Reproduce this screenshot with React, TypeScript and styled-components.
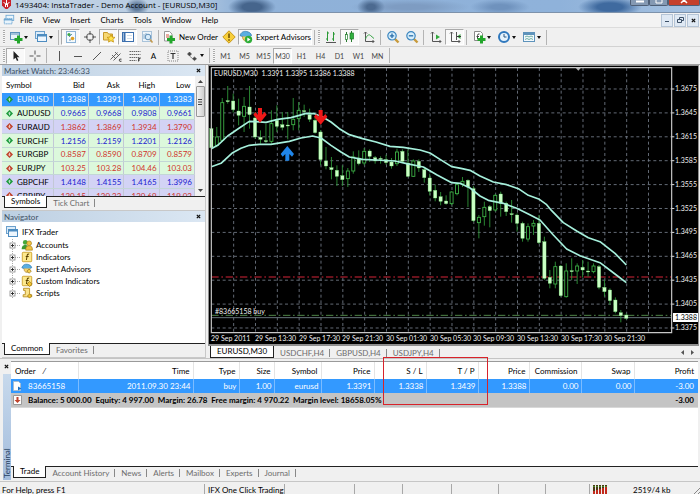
import React from "react";
import styled, { createGlobalStyle, css } from "styled-components";

const Global = createGlobalStyle`
  * { box-sizing: border-box; }
  body { margin: 0; background: #f0f0f0; overflow: hidden; }
  button, input { font: inherit; color: inherit; }
  svg { display: block; flex: none; }
`;

const UI = 'Lato, "Open Sans", sans-serif';
const CAPTION = '"Open Sans", "Noto Sans", sans-serif';

const Window = styled.div`
  display: flex;
  flex-direction: column;
  min-height: 100vh;
  font-family: ${UI};
  font-size: 8px;
  line-height: 12px;
  color: #000;
  background: #f0f0f0;
  white-space: nowrap;
`;

const TitleBar = styled.header`
  display: flex;
  align-items: flex-start;
  height: 13px;
  padding-left: 2px;
  gap: 4px;
  overflow: hidden;
  background:
    radial-gradient(ellipse 12px 9px at 137px 7px, #5d7898 30%, transparent),
    radial-gradient(ellipse 14px 9px at 371px 7px, #4c6a90 30%, transparent),
    radial-gradient(ellipse 60px 8px at 410px 7px, #7e9cc2 30%, transparent),
    radial-gradient(ellipse 30px 8px at 500px 7px, #6f92bd 30%, transparent),
    radial-gradient(ellipse 24px 10px at 252px 7px, #46658c 40%, transparent),
    radial-gradient(ellipse 32px 10px at 610px 7px, #3f6a9f 40%, transparent),
    linear-gradient(90deg, #c3d4e6 0, #b7cce2 190px, #8fb1d8 240px, #8fb2da 560px, #a5c1e0 100%);
  border-bottom: 1px solid #7d92ab;
`;

const Title = styled.h1`
  flex: 1;
  margin: 0;
  font-family: ${CAPTION};
  font-size: 8px;
  font-weight: 400;
  line-height: 9px;
`;

const CaptionButtons = styled.div`
  display: flex;
  height: 6px;
`;

const CaptionButton = styled.button<{ $close?: boolean }>`
  display: flex;
  justify-content: center;
  align-items: flex-start;
  width: ${(p) => (p.$close ? 32 : 19)}px;
  height: 6px;
  margin: 0;
  padding: 0;
  border: 1px solid #4e5f76;
  border-top: 0;
  border-radius: 0 0 2px 2px;
  background: ${(p) => (p.$close ? "#c5402c" : "#8499b3")};
`;

const MenuBar = styled.nav`
  display: flex;
  align-items: center;
  height: 15px;
  padding-left: 3px;
  background: #f3f3f3;
  border-bottom: 1px solid #dcdcdc;
`;

const MenuItems = styled.div`
  display: flex;
  flex: 1;
  gap: 10px;
  padding-left: 5px;
`;

const MenuItem = styled.button`
  padding: 0;
  border: 0;
  background: none;
`;

const MdiButton = styled.button`
  display: flex;
  align-items: center;
  justify-content: center;
  width: 12px;
  height: 13px;
  margin-right: 1px;
  padding: 0;
  border: 1px solid #b4c4d6;
  background: #dfe9f4;
`;

const ToolBar = styled.div<{ $last?: boolean }>`
  display: flex;
  align-items: center;
  height: ${(p) => (p.$last ? 18 : 19)}px;
  padding-left: 2px;
  border-bottom: 1px solid ${(p) => (p.$last ? "#a0a0a0" : "#d2d2d2")};
`;

const Grip = styled.i`
  width: 2px;
  height: 14px;
  margin: 0 1px;
  background: repeating-linear-gradient(#aaa 0 1px, #f8f8f8 1px 2px);
`;

const Sep = styled.i`
  width: 1px;
  height: 15px;
  margin: 0 2px;
  background: #b4b4b4;
`;

const ToolButton = styled.button<{ $on?: boolean }>`
  display: flex;
  align-items: center;
  justify-content: center;
  width: 19px;
  height: 16px;
  padding: 0;
  border: 1px solid transparent;
  background: none;
  ${(p) => p.$on && css`
    border-color: #a9a9a9 #fff #fff #a9a9a9;
    background: #f9f9f9;
  `}
`;

const DropButton = styled(ToolButton)`
  width: 25px;
  gap: 1px;
`;

const WideButton = styled(ToolButton)<{ $w: number }>`
  width: ${(p) => p.$w}px;
  gap: 3px;
`;

const Caret = styled.i`
  border: 2px solid transparent;
  border-top: 3px solid #111;
  border-bottom: 0;
`;

const PeriodButton = styled(ToolButton)`
  font-size: 7px;
  color: #444;
`;

const Workspace = styled.main`
  display: grid;
  grid-template-columns: 206px minmax(0, 1fr);
  gap: 2px;
  border-bottom: 1px solid #c4c4c4;
`;

const Side = styled.aside`
  display: flex;
  flex-direction: column;
`;

const Panel = styled.section`
  display: flex;
  flex-direction: column;
  margin-left: 2px;
  padding-bottom: 1px;
  border-right: 1px solid #c8c8c8;
  border-bottom: 1px solid #c8c8c8;
`;

const PanelTitle = styled.h2`
  display: flex;
  align-items: center;
  justify-content: space-between;
  height: 11px;
  margin: 0;
  padding: 0 3px 0 2px;
  font-size: 8px;
  font-weight: 400;
  line-height: 10px;
  color: #3f5165;
  background: linear-gradient(90deg, #bccfe2, #dbe7f3);
`;

const CloseButton = styled.button`
  display: flex;
  padding: 1px;
  border: 0;
  background: none;
`;

const WatchBody = styled.div`
  display: flex;
  height: 120px;
  overflow: hidden;
  background: #fff;
`;

const WatchTable = styled.table`
  flex: 1;
  height: 127px;
  border-collapse: collapse;
  table-layout: fixed;
  th, td { padding: 0 2px 0 0; text-align: right; line-height: 12px; }
  th { height: 17px; padding-right: 4px; font-weight: 400; }
  th:first-child { padding-left: 4px; text-align: left; }
`;

const WatchRow = styled.tr<{ $bg: string; $fg: string; $sel?: boolean }>`
  color: ${(p) => p.$fg};
  background: ${(p) => p.$bg};
  td { border-right: 1px solid #c3c8d6; border-bottom: 1px solid #c3d6d6; }
  td:first-child { color: ${(p) => (p.$sel ? "#fff" : "#000")}; }
`;

const SymbolCell = styled.span`
  display: flex;
  align-items: center;
  gap: 4px;
  padding-left: 4px;
`;

const ScrollBar = styled.div`
  display: flex;
  flex-direction: column;
  align-items: center;
  width: 10px;
  padding: 4px 0;
  background: #f1f1f1;
`;

const Thumb = styled.div`
  display: flex;
  align-items: center;
  justify-content: center;
  width: 9px;
  height: 31px;
  margin: 3px 0 auto;
  border: 1px solid #989898;
  border-radius: 1px;
  background: linear-gradient(90deg, #f4f4f4, #d0d0d0);
`;

const TabStrip = styled.div<{ $line?: boolean }>`
  display: flex;
  align-items: flex-start;
  height: 13px;
  padding-left: 2px;
  border-top: 1px solid ${(p) => (p.$line ? "#222" : "transparent")};
`;

const Tab = styled.button<{ $on?: boolean }>`
  position: relative;
  height: 12px;
  margin: 0;
  padding: 0 6px;
  border: 0;
  line-height: 11px;
  color: #6c6c6c;
  background: none;
  &::after {
    content: "";
    position: absolute;
    right: 0;
    top: 2px;
    height: 8px;
    border-right: 1px solid #888;
  }
  ${(p) => p.$on && css`
    margin-top: -1px;
    border: 1px solid #222;
    border-top: 0;
    color: #000;
    background: #fff;
    &::after { display: none; }
  `}
`;

const Tree = styled.ul`
  display: grid;
  grid-auto-rows: 1fr;
  align-content: stretch;
  height: 121px;
  margin: 0;
  padding: 3px 0 44px 3px;
  list-style: none;
  background: #fff;
`;

const TreeItem = styled.li<{ $child?: boolean }>`
  display: flex;
  align-items: center;
  padding-left: ${(p) => (p.$child ? 3 : 0)}px;
`;

const TreeLabel = styled.span`
  margin-left: 3px;
`;

const ChartPane = styled.section`
  display: flex;
  flex-direction: column;
  min-width: 0;
`;

const ChartSvg = styled.svg`
  width: 100%;
  height: auto;
  background: #000;
`;

const ChartTabs = styled.div`
  display: flex;
  align-items: flex-start;
  height: 11px;
  padding-left: 2px;
`;

const ScrollArrows = styled.span`
  display: flex;
  gap: 7px;
  margin: 3px 6px 0 auto;
`;

const Terminal = styled.section`
  display: grid;
  grid-template-columns: 9px minmax(0, 1fr);
  flex: 1;
  margin: 2px 2px 0;
`;

const TerminalSide = styled.div`
  display: flex;
  flex-direction: column;
  align-items: center;
  height: 119px;
  padding-top: 2px;
`;

const TerminalLabel = styled.h2`
  display: flex;
  flex: 1;
  width: 8px;
  margin: 4px 0 0;
  padding-top: 2px;
  font-size: 8px;
  font-weight: 400;
  line-height: 8px;
  color: #24405f;
  background: linear-gradient(#a3bcdc, #c7d9ec);
  writing-mode: vertical-rl;
  transform: rotate(180deg);
`;

const TerminalBody = styled.div`
  display: flex;
  flex-direction: column;
  background: linear-gradient(#fff 0 105px, #f0f0f0 105px);
  border-top: 1px solid #9a9a9a;
`;

const Orders = styled.div`
  height: 104px;
`;

const OrderTable = styled.table`
  width: 100%;
  border-collapse: collapse;
  table-layout: fixed;
  th, td { height: 14px; padding: 0 2px 0 0; text-align: right; line-height: 12px; }
  th { height: 17px; padding-right: 3px; font-weight: 400; border-right: 1px solid #e4e4e4; }
  th:first-child { padding-left: 4px; text-align: left; }
  th:last-child, td:last-child { padding-right: 4px; border-right: 0; }
`;

const OrderRow = styled.tr`
  color: #fff;
  background: #3399ff;
  td { border-right: 1px solid #7cbcff; }
`;

const BalanceRow = styled.tr`
  font-weight: 700;
  background: #c4c4c4;
  border-bottom: 1px solid #d8d8d8;
`;

const OrderId = styled.span<{ $gap: number }>`
  display: flex;
  align-items: center;
  gap: ${(p) => p.$gap}px;
  padding-left: 2px;
`;

const Highlight = styled.div`
  position: absolute;
  left: 372px;
  top: -4px;
  width: 105px;
  height: 48px;
  border: 1px solid #d8232a;
  pointer-events: none;
`;

const TerminalMain = styled.div`
  position: relative;
`;

const StatusBar = styled.footer`
  display: flex;
  align-items: center;
  height: 13px;
  padding: 3px 0 0 2px;
  overflow: hidden;
  border-top: 1px solid #c6c6c6;
`;

const StatusCell = styled.span<{ $w?: number }>`
  flex: ${(p) => (p.$w ? `0 0 ${p.$w}px` : "1")};
  height: 12px;
  padding-left: 3px;
  border-left: 1px solid #a8a8a8;
  &:first-child { padding-left: 0; border-left: 0; }
`;

const Traffic = styled.span`
  display: flex;
  align-items: center;
  gap: 24px;
  width: 111px;
  height: 12px;
  padding-left: 3px;
  border-left: 1px solid #a8a8a8;
`;

const SizeGrip = styled.span`
  margin-left: auto;
`;

/* ---------- icons ---------- */

const Svg = ({ s = 14, children }: { s?: number; children: React.ReactNode }) => (
  <svg width={s} height={s} viewBox="0 0 14 14" fill="none" aria-hidden="true">{children}</svg>
);

const Plus = ({ x = 9, y = 9 }) => (
  <path d={`M${x} ${y - 4}v8M${x - 4} ${y}h8`} stroke="#22a52b" strokeWidth="3" />
);

const IconNewChart = () => (
  <Svg><rect x="1.5" y="2.5" width="9" height="7" fill="#e8f3fb" stroke="#5c92bd" /><path d="M1 4h10" stroke="#5c92bd" /><Plus x={9.5} y={9.5} /></Svg>
);
const IconProfiles = () => (
  <Svg>
    <rect x="1.5" y="1.5" width="9" height="7" fill="#dcecf9" stroke="#6ca0cc" />
    <rect x="3.5" y="4.5" width="9" height="7" fill="#eef6fd" stroke="#4d8cc0" /><path d="M3 5.5h10" stroke="#4d8cc0" strokeWidth="2" />
  </Svg>
);
const IconWatch = () => (
  <Svg>
    <rect x="2.5" y="1.5" width="9" height="11" fill="#f4fafe" stroke="#8db4d6" />
    <circle cx="5" cy="4.5" r="1.6" fill="#3ba847" /><circle cx="8.5" cy="8.5" r="1.8" fill="#e0a020" /><path d="M5 7l3-3M5 10h2" stroke="#6a8fb0" />
  </Svg>
);
const IconData = () => (
  <Svg><circle cx="7" cy="7" r="3.5" stroke="#555" /><path d="M7 1v4M7 9v4M1 7h4M9 7h4" stroke="#555" /></Svg>
);
const IconStar = () => (
  <Svg>
    <path d="M1.5 2.5h4l1 1.5h4v6h-9z" fill="#f7d873" stroke="#c79a2c" />
    <path d="M9 4.5l1.2 2.6 2.8.3-2.1 1.9.6 2.8L9 10.7l-2.5 1.4.6-2.8L5 7.4l2.8-.3z" fill="#ffe34d" stroke="#c7930f" strokeWidth=".8" />
  </Svg>
);
const IconTerminal = () => (
  <Svg><rect x="1.5" y="2.5" width="11" height="9" fill="#fff" stroke="#3b6fae" /><path d="M3.5 3v8" stroke="#3b6fae" strokeWidth="2" /><path d="M6 5.5h5M6 8.5h5" stroke="#d2dfec" /></Svg>
);
const IconTester = () => (
  <Svg>
    <rect x="2.5" y="1.5" width="9" height="10" fill="#edf4fa" stroke="#a9c3da" /><path d="M4 4v5M6 3v5" stroke="#8cb0cf" />
    <circle cx="8" cy="7" r="2.8" fill="#d9ecfa" stroke="#5f8fb8" /><path d="M10 9.5l2.5 3" stroke="#c59b4e" strokeWidth="1.6" />
  </Svg>
);
const IconOrder = () => (
  <Svg><path d="M2.5 1.5h5l2.5 2.5v7h-7.5z" fill="#fff" stroke="#9a9a9a" /><path d="M4 5h3M4 7h3" stroke="#d0573f" /><Plus x={9} y={9.5} /></Svg>
);
const IconWarn = () => (
  <Svg><path d="M7 .8L13.2 7 7 13.2.8 7z" fill="#f8cf3a" stroke="#c8971a" /><path d="M7 3.5v4.5M7 9.3v1.5" stroke="#6b4d00" strokeWidth="1.5" /></Svg>
);
const IconExpert = ({ green = true, s = 14 }) => (
  <Svg s={s}>
    <path d="M1 5.5C2 2 5 1 7.5 1.5S12 3 12.5 5.5C10 7 4 7.5 1 5.5z" fill="#5aaee0" stroke="#2c78ae" strokeWidth=".8" />
    <path d="M3.5 6.5c0 3 1.5 4.5 3.5 4.5s3.5-2 3.5-4.5" fill="#f5d16a" stroke="#a87e20" strokeWidth=".7" />
    {green ? <><circle cx="9.5" cy="9.5" r="3.7" fill="#2fae38" /><path d="M8.3 7.5l3.2 2-3.2 2z" fill="#fff" /></> : <path d="M9.5 7l2.5 2.5-2.5 2.5L7 9.5z" fill="#f7cf4c" stroke="#8f6c14" strokeWidth=".8" />}
  </Svg>
);
const Axes = ({ c = "#555" }) => <path d="M3.5 2v9.5H12M2 3.5L3.5 2 5 3.5M10.5 10l1.5 1.5-1.5 1.5" stroke={c} />;
const IconBars = () => <Svg><path d="M3.5 1.5V11M2 9h1.5M3.5 3H5M9.5 2v9M8 9h1.5M9.5 4H11" stroke="#2a9a35" /><path d="M2 12.5h10" stroke="#555" /></Svg>;
const IconCandles = () => <Svg><path d="M3.5 2v10M8.5 1v11" stroke="#2a7a30" /><rect x="7" y="3" width="3.5" height="6" fill="#31b03e" stroke="#1b7d26" strokeWidth=".7" /><rect x="2.5" y="4.5" width="2" height="5" fill="#fff" stroke="#1b7d26" strokeWidth=".7" /></Svg>;
const IconLine = () => <Svg><Axes /><path d="M3.5 9C5 5 7 4 8.5 5.5L12 8.5" stroke="#37a344" /></Svg>;
const IconZoom = ({ plus }: { plus?: boolean }) => (
  <Svg>
    <path d="M8.5 8.5l4 4" stroke="#c79a3c" strokeWidth="2.4" /><circle cx="6" cy="5.8" r="4.2" fill="#d8effc" stroke="#3c86bf" strokeWidth="1.2" />
    <path d={plus ? "M3.8 5.8h4.4M6 3.6V8" : "M3.8 5.8h4.4"} stroke="#2a6fab" strokeWidth="1.3" />
  </Svg>
);
const IconScroll = () => <Svg><Axes /><path d="M7 4.5l4 2.5-4 2.5z" fill="#31a83c" /></Svg>;
const IconShift = () => <Svg><Axes /><path d="M8.5 2v8" stroke="#555" /><path d="M12.5 4v5L9 6.5z" fill="#31a83c" /><path d="M9 6.5h4" stroke="#333" /></Svg>;
const IconIndicators = () => <Svg><path d="M2.5 1.5h6l2 2v7h-8z" fill="#fff" stroke="#8a8a8a" /><path d="M5.5 9V5.5Q5.5 3.5 7.5 4M4.5 6.5H7" stroke="#444" /><Plus x={9.5} y={9.5} /></Svg>;
const IconClock = () => <Svg><circle cx="7" cy="7" r="5" fill="#e6f3fd" stroke="#2f78bd" strokeWidth="2" /><path d="M7 4v3h2.5" stroke="#2a567f" /></Svg>;
const IconTemplate = () => <Svg><rect x="1.5" y="2.5" width="11" height="9" fill="#f3f9fd" stroke="#5e93bb" /><path d="M1.5 4h11" stroke="#5e93bb" strokeWidth="2" /><path d="M3 7l2-1 2 1 2-1 2 1M3 9.5l2-1 2 1 2-1 2 1" stroke="#4c9c8a" strokeWidth=".8" /></Svg>;

const IconCursor = () => <Svg><path d="M4.5 2v8.5l2-1.8 1.5 3.3 1.4-.7-1.5-3.1h2.6z" fill="#222" /></Svg>;
const IconCross = () => <Svg><path d="M7 1.5v4M7 8.5v4M1.5 7h4M8.5 7h4" stroke="#555" /></Svg>;
const IconVLine = () => <Svg><path d="M7.5 2v10" stroke="#555" /></Svg>;
const IconHLine = () => <Svg><path d="M3 7.5h8" stroke="#555" /></Svg>;
const IconTrend = () => <Svg><path d="M3 11l8-8" stroke="#555" /></Svg>;
const IconChannel = () => <Svg><path d="M1.5 10.5l7-7M4.5 11.5l7-7M3 6l4 4M6 3l4 4" stroke="#555" strokeWidth=".9" /><path d="M12.5 10.2q-2.2-.8-2.2 1t2.2 1" stroke="#333" strokeWidth=".9" /></Svg>;
const IconFibo = () => <Svg><path d="M1.5 2.5h11M1.5 5.5h11M1.5 8.5h11M1.5 11.5h7" stroke="#666" strokeDasharray="1.5 .6" /><path d="M10.5 12.5v-3h2M10.5 11h1.5" stroke="#333" strokeWidth=".9" /></Svg>;
const IconTextBox = () => <Svg><rect x="2" y="2" width="10" height="10" stroke="#777" strokeWidth=".9" strokeDasharray="1 1" /><path d="M4.5 4.5h5M7 4.5V10" stroke="#333" strokeWidth="1.2" /></Svg>;
const IconArrows = () => <Svg><path d="M4.5 3l2 2-2 2-2-2zM9.5 8l2 1.8-2 1.8-2-1.8zM4.5 7l3 2.5" fill="#444" stroke="#444" strokeWidth=".6" /></Svg>;

const IconX = ({ s = 5 }) => <svg width={s} height={s} viewBox="0 0 6 6" aria-hidden="true"><path d="M1 1l4 4M5 1L1 5" stroke="#111" strokeWidth="1.5" /></svg>;

const Direction = ({ up }: { up?: boolean }) => (
  <svg width="7" height="7" viewBox="0 0 8 8" aria-hidden="true">
    <path d="M4 0l4 4-4 4-4-4z" fill={up ? "#1c9a3c" : "#c0432c"} />
    <path d={up ? "M4 2l1.8 2H4.6v2H3.4V4H2.2z" : "M4 6L2.2 4h1.2V2h1.2v2h1.2z"} fill="#fff" opacity=".7" />
  </svg>
);

const Logo = () => (
  <svg width="9" height="9" viewBox="0 0 9 9" aria-hidden="true">
    <path d="M0 0h9v5.5L5.5 9h-2L0 5.5z" fill="#c8202a" /><path d="M1.5 2.5l2 1V7M7.5 2.5l-2 1V7M4.5 0v5" stroke="#fff" fill="none" />
  </svg>
);

const TreeGlyph = ({ kind }: { kind: string }) => {
  if (kind === "experts") return <IconExpert green={false} s={12} />;
  if (kind === "accounts") return (
    <Svg s={12}><circle cx="5" cy="4" r="2.8" fill="#46a83a" /><path d="M.8 12c0-4 2-5 4.2-5s4 1 4 5z" fill="#3c9a32" /><circle cx="9.5" cy="5" r="2.8" fill="#f0c243" stroke="#9c7410" strokeWidth=".7" /><path d="M5.5 13c0-4 1.5-5 4-5s3.8 1 3.8 5z" fill="#f0c243" stroke="#9c7410" strokeWidth=".7" /></Svg>
  );
  if (kind === "scripts") return (
    <Svg s={12}><path d="M3 1.5h7v7.5h2.5v2.5h-10V9H5V4H3z" fill="#fbe38a" stroke="#b58a1c" /><path d="M10 8l2.5 2.5L10 13 7.5 10.5z" fill="#f3c430" stroke="#8f6c14" strokeWidth=".8" /></Svg>
  );
  return (
    <Svg s={12}>
      <rect x="1.5" y="1.5" width="11" height="11" rx="1" fill="#fde98e" stroke="#c99e25" />
      <path d="M9.5 3.8Q7.6 3 7.2 5.2L6.3 10.5M5.5 6.5h3.5" stroke="#5d4300" strokeWidth="1.2" />
      {kind === "custom" && <path d="M10 7.5l3 3-3 3-3-3z" fill="#f3c430" stroke="#8f6c14" strokeWidth=".8" />}
    </Svg>
  );
};

const Expander = () => (
  <svg width="13" height="12" viewBox="0 0 13 12" aria-hidden="true">
    <path d="M4.5 0v12M5 6.5h8" stroke="#aaa" strokeDasharray="1 1" />
    <rect x="2" y="4" width="5" height="5" fill="#fff" stroke="#888" strokeWidth=".8" /><path d="M3 6.5h3M4.5 5v3" stroke="#222" strokeWidth=".9" />
  </svg>
);

/* ---------- chart ---------- */

type Kind = "f" | "h"; // filled (down) or hollow (up)
// [kind, body top, body bottom, wick top, wick bottom], three units to a pixel
const candles: [Kind, number, number, number, number][] = [
  ["f",200,257,198,260],["h",225,250,195,256],["h",122,235,108,240],["f",116,119,72,125],["f",117,143,95,152],
  ["f",147,160,110,190],["h",133,163,105,210],["f",135,158,72,200],["f",168,225,150,230],["f",226,232,205,245],
  ["f",236,239,185,243],["h",185,238,145,245],["f",175,193,130,210],["f",188,196,150,205],["f",189,192,150,232],
  ["h",172,188,108,205],["h",145,170,120,205],["f",146,149,128,165],["f",158,172,140,180],["f",175,212,165,215],
  ["f",210,293,205,310],["f",297,312,255,322],["f",317,323,285,352],["f",325,343,310,372],["f",341,353,310,372],
  ["h",327,350,318,375],["h",285,327,268,335],["f",288,305,265,310],["h",268,303,258,310],["f",267,283,262,300],
  ["f",287,297,282,305],["f",289,292,283,305],["f",293,302,278,308],["f",300,312,288,320],["h",270,305,260,312],
  ["f",268,298,262,303],["f",303,343,262,345],["h",297,343,292,345],["f",298,318,292,330],["f",323,347,318,362],
  ["f",348,388,335,400],["f",385,408,368,418],["f",404,418,390,430],["f",417,425,400,428],["h",390,425,388,430],
  ["h",368,395,362,400],["h",358,366,345,375],["f",355,375,352,435],["f",380,476,372,480],["h",466,482,459,529],
  ["h",436,464,419,491],["f",434,446,429,496],["h",400,444,396,449],["f",396,424,389,464],["f",424,449,419,462],
  ["f",455,458,414,482],["f",459,484,454,509],["f",484,529,479,539],["h",494,531,484,539],["h",484,492,474,519],
  ["f",484,542,459,546],["f",539,649,524,654],["f",646,664,624,679],["h",614,666,599,679],["f",612,701,609,704],
  ["h",627,704,604,707],["f",626,629,589,654],["h",612,627,604,666],["f",616,624,594,646],["f",627,630,599,644],
  ["h",612,629,604,634],["f",614,676,609,682],["f",676,689,654,704],["f",684,716,679,729],["f",714,749,706,754],
  ["f",752,761,744,781],["f",759,769,754,772],
];

const upperBand = "16,260 35,250 65,222 100,198 130,178 150,179 180,181 215,172 255,167 280,160 300,154 325,155 350,165 375,180 400,200 430,218 470,230 510,240 552,253 592,256 642,264 672,273 702,292 737,314 765,319 792,325 822,342 862,360 902,368 937,380 967,400 1000,412 1022,428 1037,446 1072,482 1112,507 1147,527 1182,539 1227,574 1261,609";
const lowerBand = "16,314 45,304 80,272 105,259 130,250 160,247 195,247 250,238 285,228 320,222 345,228 375,250 405,270 430,285 470,292 510,294 567,297 602,305 652,315 692,338 737,362 762,364 792,378 822,402 847,415 892,424 932,439 967,456 1002,474 1042,519 1082,561 1122,581 1182,602 1227,636 1261,662";

const gridX = Array.from({ length: 20 }, (_, k) => 83 + k * 65.5);
const gridY = Array.from({ length: 11 }, (_, k) => 81 + k * 71.7);
const prices = ["1.3675","1.3645","1.3615","1.3585","1.3555","1.3525","1.3495","1.3465","1.3435","1.3405","1.3375"];
const times = ["29 Sep 2011","29 Sep 13:30","29 Sep 17:30","29 Sep 21:30","30 Sep 01:30","30 Sep 05:30","30 Sep 09:30","30 Sep 13:30","30 Sep 17:30","30 Sep 21:30"];

const downArrow = "M-6 -22h12v20l8 -8 6 8 -20 24 -20 -24 6 -8 8 8z";

const Chart = () => (
  <ChartSvg viewBox="208 65 492 282" role="img" aria-label="EURUSD,M30 candlestick chart">
    <rect x="208" y="65" width="492" height="282" fill="#f0f0f0" />
    <rect x="208" y="65" width="491" height="281" fill="#8f8f8f" />
    <rect x="209" y="66" width="489" height="278" fill="#000" />
    <g transform="translate(206 62) scale(.33333)">
      <g stroke="#737b88" strokeWidth="2.6" strokeDasharray="9 8">
        {gridX.map((x) => <path key={x} d={`M${x} 18V812`} />)}
        {gridY.map((y) => <path key={y} d={`M16 ${y}H1397`} />)}
      </g>
      <path d="M16 645H1397" stroke="#8e1826" strokeWidth="4" strokeDasharray="22 8 5 8" />
      <path d="M16 760H1397" stroke="#4f8648" strokeWidth="3" strokeDasharray="22 8 5 8" />
      <path d="M16 767H1397" stroke="#66737c" strokeWidth="3" />
      {candles.map(([kind, top, bottom, high, low], i) => {
        const x = 16 + i * 16.38;
        return (
          <g key={i}>
            <path d={`M${x} ${high}V${low}`} stroke="#2f9a3a" strokeWidth="2.6" />
            {kind === "f"
              ? <rect x={x - 5} y={top} width="10" height={bottom - top} fill="#c9ffc4" stroke="#7de27c" strokeWidth="1" />
              : <rect x={x - 4.5} y={top} width="9" height={bottom - top} fill="#000" stroke="#3fb548" strokeWidth="2.6" />}
          </g>
        );
      })}
      <g stroke="#a6f0dc" strokeWidth="5" fill="none" strokeLinejoin="round">
        <polyline points={upperBand} />
        <polyline points={lowerBand} />
      </g>
      <path d={downArrow} transform="translate(162 160)" fill="#f01818" />
      <path d={downArrow} transform="translate(344 166)" fill="#f01818" />
      <path d={downArrow} transform="translate(244 274) rotate(180)" fill="#1f86ea" />
      <path d="M137 0h16l-8 9z" transform="translate(972 17)" fill="#b5b5b5" />
      <path d="M16 812V17H1397V812z" fill="none" stroke="#c8c8c8" strokeWidth="3.5" />
      {gridY.map((y) => <path key={y} d={`M1397 ${y}h8`} stroke="#ddd" strokeWidth="3" />)}
    </g>
    <rect x="673" y="313" width="25" height="9" fill="#fff" />
    <g fontFamily={UI} fontSize="7" fill="#eee">
      <text x="214" y="76" xmlSpace="preserve">EURUSD,M30  1.3391 1.3395 1.3386 1.3388</text>
      <text x="215" y="314">#83665158 buy</text>
      {prices.map((p, k) => <text key={p} x="675" y={91 + Math.round(k * 23.9)}>{p}</text>)}
      <text x="675" y="320" fill="#000">1.3388</text>
      {times.map((t, k) => <text key={t} x={k === 0 ? 211 : 255 + Math.round((k - 1) * 43.68)} y="341">{t}</text>)}
    </g>
  </ChartSvg>
);

/* ---------- data ---------- */

const BLUE = "#1a1ad0";
const RED = "#d0342c";
const GREEN_BG = "#dcf8dc";
const LILAC_BG = "#d3d3f5";
const quotes: { s: string; up?: boolean; v: string[]; sel?: boolean; fg: string; bg: string }[] = [
  { s: "EURUSD", up: true, v: ["1.3388", "1.3391", "1.3600", "1.3383"], sel: true, fg: "#fff", bg: "#3399ff" },
  { s: "AUDUSD", up: true, v: ["0.9665", "0.9668", "0.9808", "0.9661"], fg: BLUE, bg: GREEN_BG },
  { s: "EURAUD", v: ["1.3862", "1.3869", "1.3934", "1.3790"], fg: RED, bg: LILAC_BG },
  { s: "EURCHF", up: true, v: ["1.2156", "1.2159", "1.2201", "1.2126"], fg: BLUE, bg: GREEN_BG },
  { s: "EURGBP", v: ["0.8587", "0.8590", "0.8709", "0.8579"], fg: RED, bg: GREEN_BG },
  { s: "EURJPY", v: ["103.25", "103.28", "104.46", "103.03"], fg: RED, bg: GREEN_BG },
  { s: "GBPCHF", up: true, v: ["1.4148", "1.4155", "1.4165", "1.3996"], fg: BLUE, bg: LILAC_BG },
  { s: "GBPJPY", v: ["120.15", "120.22", "120.69", "119.02"], fg: RED, bg: LILAC_BG },
];

const tree = [
  ["accounts", "Accounts"], ["indicators", "Indicators"], ["experts", "Expert Advisors"],
  ["custom", "Custom Indicators"], ["scripts", "Scripts"],
];

const columns: [string, number][] = [
  ["Order", 67], ["Time", 115], ["Type", 46], ["Size", 35], ["Symbol", 47], ["Price", 53],
  ["S / L", 52], ["T / P", 52], ["Price", 51], ["Commission", 52], ["Swap", 53], ["Profit", 64],
];

const orderValues = ["2011.09.30 23:44", "buy", "1.00", "eurusd", "1.3391", "1.3338", "1.3439", "1.3388", "0.00", "0.00", "-3.00"];

const periods = ["M1", "M5", "M15", "M30", "H1", "H4", "D1", "W1", "MN"];

export default function App() {
  return (
    <Window>
      <Global />
      <TitleBar>
        <Logo />
        <Title>1493404: InstaTrader - Demo Account - [EURUSD,M30]</Title>
        <CaptionButtons>
          <CaptionButton aria-label="Minimize"><svg width="8" height="3"><path d="M0 1.5h8" stroke="#fff" strokeWidth="2" /></svg></CaptionButton>
          <CaptionButton aria-label="Restore"><svg width="8" height="4"><path d="M1 0v3h6V0" stroke="#fff" fill="none" /></svg></CaptionButton>
          <CaptionButton $close aria-label="Close"><svg width="8" height="4"><path d="M1 3l3-3 3 3" stroke="#fff" fill="none" strokeWidth="1.5" /></svg></CaptionButton>
        </CaptionButtons>
      </TitleBar>

      <MenuBar>
        <svg width="12" height="12" viewBox="0 0 14 14" fill="none" aria-hidden="true">
          <rect x="3.5" y="1.5" width="9" height="6" fill="#e8f4fc" stroke="#6fa7d2" />
          <rect x="1.5" y="5.5" width="9" height="6" fill="#e8f4fc" stroke="#6fa7d2" strokeDasharray="2 .5" /><path d="M1 6.5h10" stroke="#6fa7d2" strokeWidth="2" />
        </svg>
        <MenuItems>
          {["File", "View", "Insert", "Charts", "Tools", "Window", "Help"].map((m) => <MenuItem key={m}>{m}</MenuItem>)}
        </MenuItems>
        <MdiButton aria-label="Minimize chart"><svg width="6" height="6"><path d="M1 4.5h4" stroke="#3b4f66" /></svg></MdiButton>
        <MdiButton aria-label="Restore chart"><svg width="7" height="7" fill="none" stroke="#3b4f66"><path d="M2.5 2V.5h4v3H5M.5 2.5h4v3h-4z" /></svg></MdiButton>
        <MdiButton aria-label="Close chart"><IconX /></MdiButton>
      </MenuBar>

      <ToolBar>
        <Grip />
        <DropButton aria-label="New chart"><IconNewChart /><Caret /></DropButton>
        <DropButton aria-label="Profiles"><IconProfiles /><Caret /></DropButton>
        <Sep />
        <ToolButton $on aria-label="Market Watch"><IconWatch /></ToolButton>
        <ToolButton aria-label="Data Window"><IconData /></ToolButton>
        <ToolButton $on aria-label="Navigator"><IconStar /></ToolButton>
        <ToolButton $on aria-label="Terminal"><IconTerminal /></ToolButton>
        <ToolButton aria-label="Strategy Tester"><IconTester /></ToolButton>
        <Sep />
        <WideButton $w={58}><IconOrder />New Order</WideButton>
        <ToolButton aria-label="MetaEditor"><IconWarn /></ToolButton>
        <WideButton $w={74} $on><IconExpert />Expert Advisors</WideButton>
        <Sep />
        <Grip />
        <ToolButton aria-label="Bar Chart"><IconBars /></ToolButton>
        <ToolButton $on aria-label="Candlesticks"><IconCandles /></ToolButton>
        <ToolButton aria-label="Line Chart"><IconLine /></ToolButton>
        <Sep />
        <ToolButton aria-label="Zoom In"><IconZoom plus /></ToolButton>
        <ToolButton aria-label="Zoom Out"><IconZoom /></ToolButton>
        <Sep />
        <ToolButton aria-label="Auto Scroll"><IconScroll /></ToolButton>
        <ToolButton $on aria-label="Chart Shift"><IconShift /></ToolButton>
        <Sep />
        <DropButton aria-label="Indicators List"><IconIndicators /><Caret /></DropButton>
        <DropButton aria-label="Periodicity"><IconClock /><Caret /></DropButton>
        <DropButton aria-label="Templates"><IconTemplate /><Caret /></DropButton>
        <Sep />
      </ToolBar>

      <ToolBar $last>
        <Grip />
        <ToolButton $on aria-label="Cursor"><IconCursor /></ToolButton>
        <ToolButton aria-label="Crosshair"><IconCross /></ToolButton>
        <Sep />
        <ToolButton aria-label="Vertical Line"><IconVLine /></ToolButton>
        <ToolButton aria-label="Horizontal Line"><IconHLine /></ToolButton>
        <ToolButton aria-label="Trendline"><IconTrend /></ToolButton>
        <ToolButton aria-label="Channel"><IconChannel /></ToolButton>
        <ToolButton aria-label="Fibonacci"><IconFibo /></ToolButton>
        <ToolButton>A</ToolButton>
        <ToolButton aria-label="Text Label"><IconTextBox /></ToolButton>
        <DropButton aria-label="Arrows"><IconArrows /><Caret /></DropButton>
        <Sep />
        <Grip />
        {periods.map((p) => <PeriodButton key={p} $on={p === "M30"}>{p}</PeriodButton>)}
        <Sep />
      </ToolBar>

      <Workspace>
        <Side>
          <Panel>
            <PanelTitle>Market Watch: 23:46:33<CloseButton aria-label="Close Market Watch"><IconX /></CloseButton></PanelTitle>
            <WatchBody>
              <WatchTable>
                <colgroup><col style={{ width: 51 }} /><col /><col /><col /><col /></colgroup>
                <thead><tr><th>Symbol</th><th>Bid</th><th>Ask</th><th>High</th><th>Low</th></tr></thead>
                <tbody>
                  {quotes.map((q) => (
                    <WatchRow key={q.s} $bg={q.bg} $fg={q.fg} $sel={q.sel}>
                      <td><SymbolCell><Direction up={q.up} />{q.s}</SymbolCell></td>
                      {q.v.map((v, i) => <td key={i}>{v}</td>)}
                    </WatchRow>
                  ))}
                </tbody>
              </WatchTable>
              <ScrollBar>
                <svg width="5" height="3"><path d="M0 3h5L2.5 0z" fill="#444" /></svg>
                <Thumb><svg width="4" height="6"><path d="M0 .5h4M0 3h4M0 5.5h4" stroke="#444" /></svg></Thumb>
                <svg width="5" height="3"><path d="M0 0h5L2.5 3z" fill="#444" /></svg>
              </ScrollBar>
            </WatchBody>
            <TabStrip $line><Tab $on>Symbols</Tab><Tab>Tick Chart</Tab></TabStrip>
          </Panel>

          <Panel>
            <PanelTitle>Navigator<CloseButton aria-label="Close Navigator"><IconX /></CloseButton></PanelTitle>
            <Tree>
              <TreeItem><IconProfiles /><TreeLabel>IFX Trader</TreeLabel></TreeItem>
              {tree.map(([kind, label]) => (
                <TreeItem key={kind} $child><Expander /><TreeGlyph kind={kind} /><TreeLabel>{label}</TreeLabel></TreeItem>
              ))}
            </Tree>
            <TabStrip $line><Tab $on>Common</Tab><Tab>Favorites</Tab></TabStrip>
          </Panel>
        </Side>

        <ChartPane>
          <Chart />
          <ChartTabs>
            <Tab $on>EURUSD,M30</Tab><Tab>USDCHF,H4</Tab><Tab>GBPUSD,H4</Tab><Tab>USDJPY,H4</Tab>
            <ScrollArrows>
              <svg width="3" height="5"><path d="M3 0v5L0 2.5z" fill="#555" /></svg>
              <svg width="3" height="5"><path d="M0 0v5l3-2.5z" fill="#555" /></svg>
            </ScrollArrows>
          </ChartTabs>
        </ChartPane>
      </Workspace>

      <Terminal>
        <TerminalSide>
          <CloseButton aria-label="Close Terminal"><IconX /></CloseButton>
          <TerminalLabel>Terminal</TerminalLabel>
        </TerminalSide>
        <TerminalMain>
          <TerminalBody>
            <Orders>
              <OrderTable>
                <colgroup>{columns.map(([, w], i) => <col key={i} style={{ width: w }} />)}</colgroup>
                <thead><tr>{columns.map(([c], i) => <th key={i}>{c}{i === 0 && <>&nbsp;&nbsp;&nbsp; ⁄</>}</th>)}</tr></thead>
                <tbody>
                  <OrderRow>
                    <td>
                      <OrderId $gap={6}>
                        <svg width="9" height="10" viewBox="0 0 9 10"><path d="M.5.5h5l2 2v7h-7z" fill="#fff" stroke="#a8bdd0" /><path d="M5 5.5l3.5 2L5 9.5z" fill="#1c6fc0" /></svg>
                        83665158
                      </OrderId>
                    </td>
                    {orderValues.map((v, i) => <td key={i}>{v}</td>)}
                  </OrderRow>
                  <BalanceRow>
                    <td colSpan={11}>
                      <OrderId $gap={6}>
                        <svg width="9" height="10" viewBox="0 0 9 10"><path d="M.5.5h8v9h-8z" fill="#fff" stroke="#999" /><path d="M4.5 8L1.5 5h2V2h2v3h2z" fill="#c0432c" /></svg>
                        <span>Balance: 5 000.00&nbsp; Equity: 4 997.00&nbsp; Margin: 26.78&nbsp; Free margin: 4 970.22&nbsp; Margin level: 18658.05%</span>
                      </OrderId>
                    </td>
                    <td>-3.00</td>
                  </BalanceRow>
                </tbody>
              </OrderTable>
            </Orders>
            <TabStrip $line>
              <Tab $on>Trade</Tab><Tab>Account History</Tab><Tab>News</Tab><Tab>Alerts</Tab><Tab>Mailbox</Tab><Tab>Experts</Tab><Tab>Journal</Tab>
            </TabStrip>
          </TerminalBody>
          <Highlight />
        </TerminalMain>
      </Terminal>

      <StatusBar>
        <StatusCell $w={202}>For Help, press F1</StatusCell>
        <StatusCell $w={79}>IFX One Click Trading</StatusCell>
        <StatusCell $w={70} /><StatusCell $w={48} /><StatusCell $w={49} /><StatusCell $w={47} /><StatusCell $w={47} /><StatusCell />
        <Traffic>
          <svg width="16" height="9" viewBox="0 0 16 9"><path d="M1 0v9M4 0v9M7 0v9M10 0v9M13 0v9" stroke="#4b3a14" strokeWidth="2" /><path d="M1 6v3M4 5v4M7 4v5M10 3v6M13 2v7" stroke="#c22a1c" strokeWidth="2" /><path d="M0 1.5h15" stroke="#4f8f2c" strokeDasharray="2 1" /></svg>
          2519/4 kb
          <SizeGrip><svg width="8" height="8"><path d="M0 8L8 0M4 8l4-4" stroke="#888" /></svg></SizeGrip>
        </Traffic>
      </StatusBar>
    </Window>
  );
}
